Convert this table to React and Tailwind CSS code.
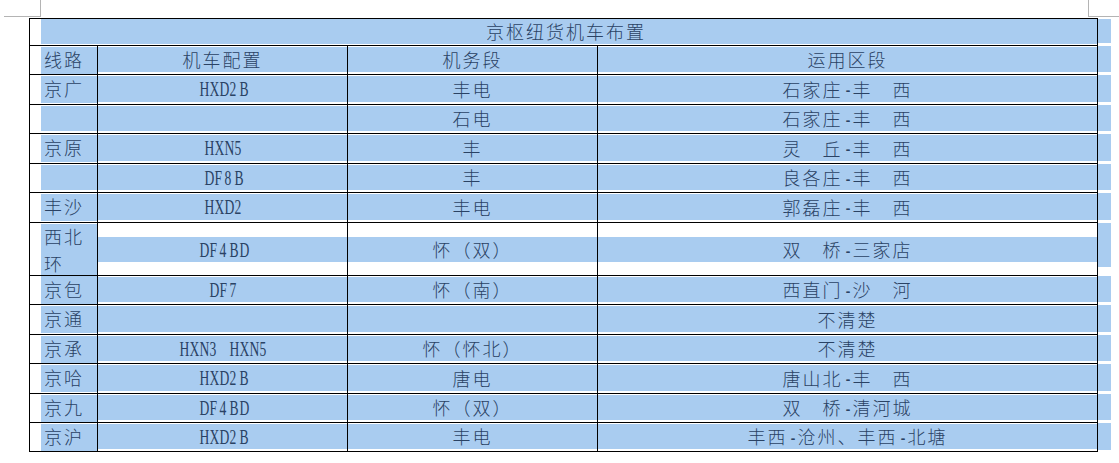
import React from "react";

const BLUE = "bg-[#a9ccf0]";

function T({ s }) {
  if (!s) return null;
  const parts = s.match(/[\x00-\x7f]+|[^\x00-\x7f]+/g) || [];
  return parts.map((p, i) =>
    /^[\x00-\x7f]/.test(p) ? (
      <span key={i} className="inline-flex items-center">
        {p.split("").map((ch, j) => (
          <span
            key={j}
            className="inline-block w-[10px] text-center font-['Liberation_Serif',serif] text-[20px] leading-none scale-x-[0.68]"
          >
            {ch === " " ? "\u00a0" : ch}
          </span>
        ))}
      </span>
    ) : (
      <span
        key={i}
        className="font-['Noto_Sans_CJK_SC',sans-serif] text-[18px] font-light leading-[25px] tracking-[2px]"
      >
        {p}
      </span>
    )
  );
}

const rows = [
  { h: "h-[29px]", c: ["线路", "机车配置", "机务段", "运用区段"] },
  { h: "h-[30px]", c: ["京广", "HXD2B", "丰电", "石家庄-丰　西"] },
  { h: "h-[29px]", c: ["", "", "石电", "石家庄-丰　西"] },
  { h: "h-[30px]", c: ["京原", "HXN5", "丰", "灵　丘-丰　西"] },
  { h: "h-[29px]", c: ["", "DF8B", "丰", "良各庄-丰　西"] },
  { h: "h-[30px]", c: ["丰沙", "HXD2", "丰电", "郭磊庄-丰　西"] },
  { h: "h-[53px]", c: ["西北环", "DF4BD", "怀（双）", "双　桥-三家店"], tall: true },
  { h: "h-[29px]", c: ["京包", "DF7", "怀（南）", "西直门-沙　河"] },
  { h: "h-[30px]", c: ["京通", "", "", "不清楚"] },
  { h: "h-[29px]", c: ["京承", "HXN3 HXN5", "怀（怀北）", "不清楚"] },
  { h: "h-[30px]", c: ["京哈", "HXD2B", "唐电", "唐山北-丰　西"] },
  { h: "h-[29px]", c: ["京九", "DF4BD", "怀（双）", "双　桥-清河城"] },
  { h: "h-[30px]", c: ["京沪", "HXD2B", "丰电", "丰西-沧州、丰西-北塘"], last: true },
];

function Strip({ tall }) {
  return (
    <div className={`flex w-[13px] flex-col pt-[1px] ${tall ? "pb-[8px]" : "pb-[2px]"}`}>
      <div className={`flex-1 ${BLUE}`} />
    </div>
  );
}

function CenterCell({ w, text, tall }) {
  return (
    <div className={`${w} flex flex-col border-l border-black pt-[1px] pb-[2px]`}>
      {tall ? (
        <div className="flex flex-1 flex-col">
          <div className="h-[13px]" />
          <div className={`flex h-[25px] items-center justify-center ${BLUE}`}>
            <T s={text} />
          </div>
          <div className="flex-1" />
        </div>
      ) : (
        <div className={`flex flex-1 items-center justify-center ${BLUE}`}>
          <T s={text} />
        </div>
      )}
    </div>
  );
}

export default function App() {
  return (
    <div className="relative h-[463px] w-[1119px] overflow-hidden bg-white text-[#2a4264]">
      {/* crop marks */}
      <div className="absolute left-[4px] top-[16px] h-px w-[37px] bg-[#b4b4b4]" />
      <div className="absolute left-[40px] top-0 h-[17px] w-px bg-[#b4b4b4]" />
      <div className="absolute left-[1088px] top-[16px] h-px w-[31px] bg-[#b4b4b4]" />
      <div className="absolute left-[1088px] top-0 h-[17px] w-px bg-[#b4b4b4]" />

      <div className="flex flex-col pl-[29px] pt-[18px]">
        {/* title row */}
        <div className="flex h-[27px]">
          <div className="flex w-[1069px] border-x border-t border-black pb-[1px] pl-[11px]">
            <div className={`flex flex-1 items-center justify-center pr-[6px] ${BLUE}`}>
              <T s="京枢纽货机车布置" />
            </div>
          </div>
          <Strip />
        </div>

        {rows.map((r, i) => (
          <div key={i} className={`flex ${r.h}`}>
            <div
              className={`flex w-[1069px] border-r border-t border-black ${
                r.last ? "border-b" : ""
              }`}
            >
              <div className="flex w-[68px] flex-col border-l border-black pb-[2px] pl-[11px] pt-[1px]">
                <div className={`flex flex-1 items-center pl-[3px] leading-[25px] ${BLUE}`}>
                  <div>
                    <T s={r.c[0]} />
                  </div>
                </div>
              </div>
              <CenterCell w="w-[250px]" text={r.c[1]} tall={r.tall} />
              <CenterCell w="w-[250px]" text={r.c[2]} tall={r.tall} />
              <CenterCell w="w-[500px]" text={r.c[3]} tall={r.tall} />
            </div>
            <Strip tall={r.tall} />
          </div>
        ))}
      </div>
    </div>
  );
}
